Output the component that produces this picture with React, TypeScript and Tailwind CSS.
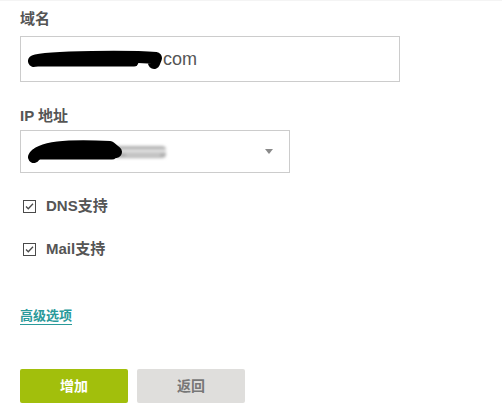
const CheckBox = () => (
  <svg width="13" height="13" viewBox="0 0 13 13" className="shrink-0">
    <rect x="0.5" y="0.5" width="12" height="12" fill="#fff" stroke="#4a4a4a" />
    <path d="M3 6.5 L5.3 8.8 L10 3.8" fill="none" stroke="#4a4a4a" strokeWidth="1.3" />
  </svg>
);

const Scribble = ({ w, blur }: { w: number; blur: number }) => (
  <svg width={w + blur} height="26" viewBox={`0 0 ${w + blur} 26`} className="shrink-0">
    <defs>
      <filter id="bl" x="-10%" y="-50%" width="120%" height="200%">
        <feGaussianBlur stdDeviation="1.4" />
      </filter>
    </defs>
    {blur > 0 && (
      <g filter="url(#bl)">
        <rect x={w - 8} y="7" width={blur} height="12" rx="4" fill="#b0b0b0" />
        <path d={`M${w - 4} 12 H${w + blur - 8}`} stroke="#e8e8e8" strokeWidth="3" />
        <path d={`M${w + 4} 16 H${w + blur - 14}`} stroke="#d0d0d0" strokeWidth="2" />
      </g>
    )}
    {blur > 0 ? (
      <>
        <path d={`M8 18 C14 8 40 6 ${w - 12} 8 L${w - 6} 13`} fill="none" stroke="#000" strokeWidth="12" strokeLinecap="round" strokeLinejoin="round" />
        <path d={`M10 15 H${w - 10}`} stroke="#000" strokeWidth="11" strokeLinecap="round" />
      </>
    ) : (
      <>
        <path d={`M7 15 C20 10 ${w - 30} 10 ${w - 8} 12 L${w - 10} 17`} fill="none" stroke="#000" strokeWidth="12" strokeLinecap="round" strokeLinejoin="round" />
        <path d={`M10 16 H${w - 30}`} stroke="#000" strokeWidth="9" strokeLinecap="round" />
      </>
    )}
  </svg>
);

export default function App() {
  return (
    <div
      className="w-[502px] h-[414px] bg-white border-t border-[#f4f4f4] px-5 pt-[8px] text-[#555]"
      style={{ fontFamily: '"Liberation Sans", "Noto Sans CJK SC", sans-serif' }}
    >
      <div className="h-5 leading-5 text-[15px] font-bold">域名</div>
      <div className="mt-[7px] w-[380px] h-[46px] border border-[#cccccc] flex items-center pl-[6px]">
        <Scribble w={137} blur={0} />
        <span className="text-[18px] text-[#555] -ml-[1px]">com</span>
      </div>

      <div className="mt-[24px] h-5 leading-5 text-[15px] font-bold">IP 地址</div>
      <div className="mt-[4px] w-[270px] h-[43px] border border-[#cccccc] flex items-center justify-between pl-[5px] pr-[16px]">
        <Scribble w={96} blur={52} />
        <svg width="8" height="5" viewBox="0 0 8 5">
          <path d="M0 0 H8 L4 5 Z" fill="#8a8a8a" />
        </svg>
      </div>

      <div className="mt-[23px] h-5 flex items-center pl-[3px] gap-[10px]">
        <CheckBox />
        <span className="text-[15px] font-bold">DNS支持</span>
      </div>
      <div className="mt-[23px] h-5 flex items-center pl-[3px] gap-[10px]">
        <CheckBox />
        <span className="text-[15px] font-bold">Mail支持</span>
      </div>

      <div className="mt-[44px]">
        <span className="inline-block text-[13px] leading-[13px] font-bold text-[#2a9a9a] border-b border-[#2a9a9a] pb-[2px]">
          高级选项
        </span>
      </div>

      <div className="mt-[42px] flex gap-[9px]">
        <button className="w-[108px] h-[34px] rounded-[2px] bg-[#a2bf0c] text-white text-[14px] font-bold">增加</button>
        <button className="w-[108px] h-[34px] rounded-[2px] bg-[#dfdedc] text-[#777] text-[14px] font-bold">返回</button>
      </div>
    </div>
  );
}
